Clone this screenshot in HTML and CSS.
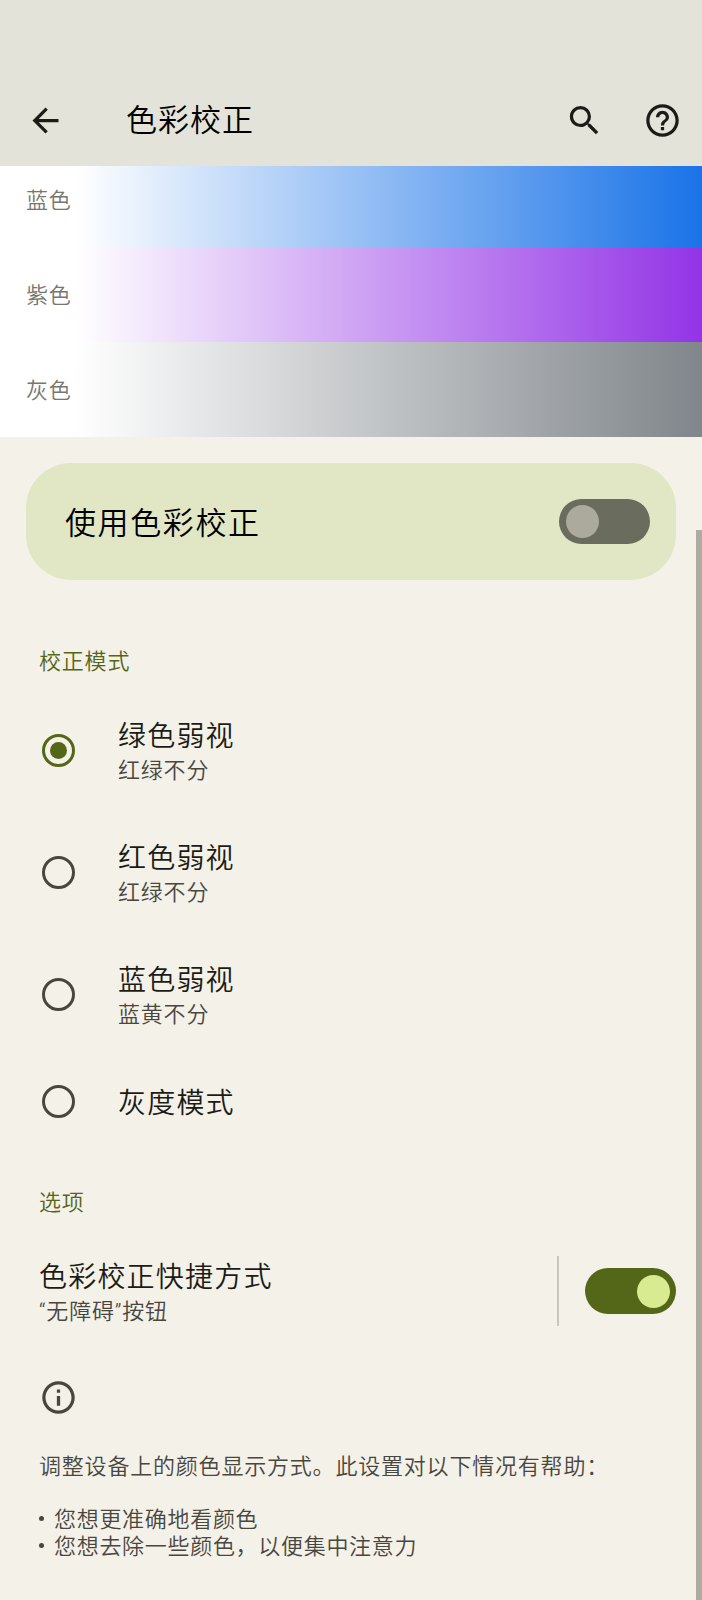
FILE: index.html
```html
<!DOCTYPE html>
<html lang="zh-CN">

<head>
  <meta charset="utf-8">
  <title>色彩校正</title>
  <link rel="stylesheet" href="styles.css">
</head>

<body>
  <header class="toolbar">
    <svg class="icon" viewBox="0 0 24 24">
      <path d="M20 11H7.83l5.59-5.59L12 4l-8 8 8 8 1.41-1.41L7.83 13H20v-2z" />
    </svg>
    <h1>色彩校正</h1>
    <svg class="icon search" viewBox="0 0 24 24">
      <path d="M15.5 14h-.79l-.28-.27A6.47 6.47 0 0 0 16 9.5 6.5 6.5 0 1 0 9.5 16c1.61 0 3.09-.59 4.23-1.57l.27.28v.79l5 4.99L20.49 19l-4.99-5zm-6 0C7.01 14 5 11.99 5 9.5S7.01 5 9.5 5 14 7.01 14 9.5 11.99 14 9.5 14z" />
    </svg>
    <svg class="icon" viewBox="0 0 24 24">
      <path d="M11 18h2v-2h-2v2zm1-16C6.48 2 2 6.48 2 12s4.48 10 10 10 10-4.48 10-10S17.52 2 12 2zm0 18c-4.41 0-8-3.59-8-8s3.59-8 8-8 8 3.59 8 8-3.59 8-8 8zm0-14c-2.21 0-4 1.79-4 4h2c0-1.1.9-2 2-2s2 .9 2 2c0 2-3 1.75-3 5h2c0-2.25 3-2.5 3-5 0-2.21-1.79-4-4-4z" />
    </svg>
  </header>

  <div class="preview">
    <div class="band blue">蓝色</div>
    <div class="band purple">紫色</div>
    <div class="band gray">灰色</div>
  </div>

  <main>
    <div class="main-switch">
      <span>使用色彩校正</span>
      <div class="switch"></div>
    </div>

    <h2>校正模式</h2>
    <div class="option">
      <div class="radio checked"></div>
      <div class="text">
        <p class="title">绿色弱视</p>
        <p class="summary">红绿不分</p>
      </div>
    </div>
    <div class="option">
      <div class="radio"></div>
      <div class="text">
        <p class="title">红色弱视</p>
        <p class="summary">红绿不分</p>
      </div>
    </div>
    <div class="option">
      <div class="radio"></div>
      <div class="text">
        <p class="title">蓝色弱视</p>
        <p class="summary">蓝黄不分</p>
      </div>
    </div>
    <div class="option single">
      <div class="radio"></div>
      <div class="text">
        <p class="title">灰度模式</p>
      </div>
    </div>

    <h2 class="options-title">选项</h2>
    <div class="shortcut">
      <div class="text">
        <p class="title">色彩校正快捷方式</p>
        <p class="summary">“无障碍”按钮</p>
      </div>
      <div class="divider"></div>
      <div class="switch on"></div>
    </div>

    <footer class="info">
      <svg class="icon" viewBox="0 0 24 24">
        <path d="M11 7h2v2h-2zm0 4h2v6h-2zm1-9C6.48 2 2 6.48 2 12s4.48 10 10 10 10-4.48 10-10S17.52 2 12 2zm0 18c-4.41 0-8-3.59-8-8s3.59-8 8-8 8 3.59 8 8-3.59 8-8 8z" />
      </svg>
      <p>调整设备上的颜色显示方式。此设置对以下情况有帮助：</p>
      <ul>
        <li>您想更准确地看颜色</li>
        <li>您想去除一些颜色，以便集中注意力</li>
      </ul>
    </footer>
  </main>
  <div class="scrollbar"></div>
</body>

</html>
```
FILE: styles.css
```css
* {
  box-sizing: border-box;
  margin: 0;
  padding: 0;
}

body {
  position: relative;
  width: 702px;
  height: 1600px;
  overflow: hidden;
  background: #f4f1e9;
  color: #1c1c17;
  font-family: "Noto Sans CJK SC", sans-serif;
  font-weight: 350;
  font-size: 22px;
  letter-spacing: 0.8px;
}

.toolbar {
  display: flex;
  align-items: center;
  height: 166px;
  padding: 74px 20px 0 26px;
  background: #e3e3da;
}

.icon {
  flex: none;
  width: 39px;
  height: 39px;
  fill: #1c1c17;
}

.toolbar h1 {
  flex: 1;
  padding: 0 0 5px 61px;
  font-size: 31px;
  font-weight: 350;
  line-height: 40px;
  letter-spacing: 1px;
  color: #000;
}

.toolbar .search {
  margin-right: 39px;
}

.preview {
  display: flex;
  flex-direction: column;
  justify-content: flex-end;
  height: 271px;
  overflow: hidden;
}

.band {
  flex: none;
  height: 95px;
  padding-left: 26px;
  line-height: 93px;
  color: #77776f;
}

.blue {
  background: linear-gradient(to right, #fff 75px, #1a73e8);
}

.purple {
  background: linear-gradient(to right, #fff 75px, #9334e6);
}

.gray {
  background: linear-gradient(to right, #fff 75px, #80868b);
}

.main-switch {
  display: flex;
  align-items: center;
  justify-content: space-between;
  height: 117px;
  margin: 26px 26px 0;
  padding: 0 26px 0 39px;
  border-radius: 45px;
  background: #e1e7c5;
  color: #000;
  font-size: 31px;
  line-height: 40px;
  letter-spacing: 1.6px;
}

.main-switch span {
  padding-bottom: 2px;
}

.switch {
  display: flex;
  align-items: center;
  flex: none;
  width: 91px;
  height: 45px;
  padding: 0 6px 0 7px;
  border-radius: 23px;
  background: #6a6c5d;
}

.switch::before {
  content: "";
  width: 33px;
  height: 33px;
  border-radius: 50%;
  background: #acaa9d;
}

.switch.on {
  justify-content: flex-end;
  height: 46px;
  background: #546618;
}

.switch.on::before {
  background: #d8eb90;
}

h2 {
  height: 109px;
  padding: 63px 39px 0;
  font-size: 22px;
  font-weight: 350;
  line-height: 32px;
  color: #546618;
}

.options-title {
  height: 83px;
  padding-top: 37px;
}

.option {
  display: flex;
  align-items: center;
  height: 122px;
  padding-left: 42px;
}

.option.single {
  height: 92px;
}

.radio {
  display: flex;
  align-items: center;
  justify-content: center;
  width: 33px;
  height: 33px;
  margin-right: 43px;
  border: 3px solid #48473f;
  border-radius: 50%;
}

.radio.checked {
  border-color: #546618;
}

.radio.checked::before {
  content: "";
  width: 17px;
  height: 17px;
  border-radius: 50%;
  background: #546618;
}

.title {
  font-size: 28px;
  line-height: 38px;
  letter-spacing: 1.2px;
}

.summary {
  padding-top: 4px;
  font-family: Roboto, "Noto Sans CJK SC", sans-serif;
  line-height: 28px;
  color: #48473f;
}

.shortcut {
  display: flex;
  align-items: center;
  height: 122px;
  padding: 0 26px 0 39px;
}

.shortcut .text {
  flex: 1;
}

.divider {
  width: 2px;
  height: 70px;
  margin-right: 26px;
  background: #c9c6bd;
}

.info {
  padding: 26px 39px 0;
  line-height: 27px;
  color: #48473f;
}

.info .icon {
  display: block;
  fill: #48473f;
}

.info p {
  margin: 34px 0 26px;
}

.info ul {
  list-style: none;
}

.info li {
  display: flex;
  align-items: center;
  letter-spacing: 0.7px;
}

.info li::before {
  content: "";
  width: 5px;
  height: 5px;
  margin: 2px 10px 0 0;
  border-radius: 50%;
  background: #48473f;
}

.scrollbar {
  position: absolute;
  top: 530px;
  right: 0;
  bottom: 0;
  width: 6px;
  background: #aeab9f;
}
```
